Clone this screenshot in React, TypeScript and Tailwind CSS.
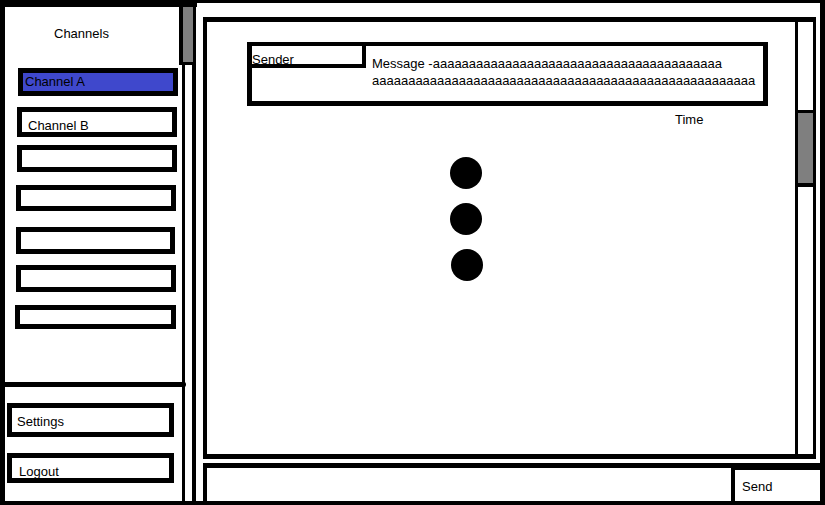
import React from "react";

const font = { fontFamily: '"Liberation Sans", Arial, sans-serif' };

export default function App() {
  const aLine1 = "Message -" + "a".repeat(40);
  const aLine2 = "a".repeat(53);
  return (
    <div
      className="w-[825px] h-[505px] box-border border-black border-l-[5px] border-t-[3px] border-r-[5px] border-b-[4px] bg-white flex text-[13px] leading-[16px] text-black overflow-hidden"
      style={font}
    >
      {/* Sidebar */}
      <div className="w-[174px] shrink-0 border-t-[4px] border-black flex flex-col">
        <div className="mt-[19px] pl-[49px]">Channels</div>

        <div className="mt-[26px] ml-[13px] w-[160px] h-[28px] box-border border-[5px] border-black bg-[#3f48cc] pl-[2px] pt-[1px]">
          Channel A
        </div>
        <div className="mt-[11px] ml-[12px] w-[160px] h-[30px] box-border border-[5px] border-black pl-[6px] pt-[6px] overflow-hidden">
          Channel B
        </div>
        <div className="mt-[8px] ml-[12px] w-[160px] h-[27px] box-border border-[5px] border-black" />
        <div className="mt-[13px] ml-[11px] w-[160px] h-[26px] box-border border-[5px] border-black" />
        <div className="mt-[16px] ml-[11px] w-[159px] h-[27px] box-border border-[5px] border-black" />
        <div className="mt-[11px] ml-[11px] w-[160px] h-[27px] box-border border-[5px] border-black" />
        <div className="mt-[13px] ml-[10px] w-[161px] h-[24px] box-border border-[5px] border-black" />

        <div className="flex-1" />
        <div className="relative z-10 h-[5px] bg-black -ml-[5px] w-[186px] rounded-r-[2px]" />

        <div className="mt-[16px] ml-[2px] w-[167px] h-[34px] box-border border-[5px] border-black pl-[5px] pt-[6px]">
          Settings
        </div>
        <div className="mt-[16px] ml-[2px] w-[167px] h-[30px] box-border border-[5px] border-black pl-[7px] pt-[6px] overflow-hidden">
          Logout
        </div>
        <div className="h-[18px]" />
      </div>

      {/* Sidebar scrollbar */}
      <div className="w-[18px] shrink-0 border-t-[4px] border-black flex flex-col pr-[1px]">
        <div className="h-[58px] box-border border-l-[4px] border-r-[3px] border-b-[3px] border-black bg-[#7f7f7f]" />
        <div className="flex-1 ml-[3px] w-[14px] box-border border-l-[3px] border-r-[4px] border-black" />
      </div>

      {/* Main column */}
      <div className="ml-[6px] w-[617px] shrink-0 flex flex-col">
        <div className="mt-[14px] mr-[4px] h-[442px] box-border border-black border-l-[4px] border-t-[5px] border-r-[3px] border-b-[5px] flex">
          <div className="flex-1 flex flex-col">
            <div className="mt-[20px] ml-[40px] w-[521px] h-[64px] box-border border-[5px] border-t-[4px] border-black flex">
              <div className="w-[114px] h-[22px] box-border border-r-[4px] border-b-[4px] border-black shrink-0">
                <div className="h-[18px] pt-[6px] whitespace-nowrap">Sender</div>
              </div>
              <div className="ml-[6px] pt-[9px] leading-[17px] whitespace-nowrap">
                <div>{aLine1}</div>
                <div>{aLine2}</div>
              </div>
            </div>
            <div className="mt-[6px] ml-[468px]">Time</div>
            <div className="mt-[29px] ml-[243px] flex flex-col gap-[14px]">
              <div className="w-[32px] h-[32px] rounded-full bg-black" />
              <div className="w-[32px] h-[32px] rounded-full bg-black" />
              <div className="w-[32px] h-[32px] rounded-full bg-black ml-[1px]" />
            </div>
          </div>
          <div className="w-[18px] shrink-0 box-border border-l-[3px] border-black">
            <div className="mt-[88px] h-[77px] box-border border-t-[3px] border-b-[4px] border-black bg-[#7f7f7f]" />
          </div>
        </div>

        <div className="mt-[4px] flex-1 flex border-t-[5px] border-black">
          <div className="w-[532px] shrink-0 box-border border-l-[4px] border-r-[4px] border-black" />
          <div className="flex-1 border-t-[2px] border-black pl-[7px] pt-[9px]">Send</div>
        </div>
      </div>
    </div>
  );
}
